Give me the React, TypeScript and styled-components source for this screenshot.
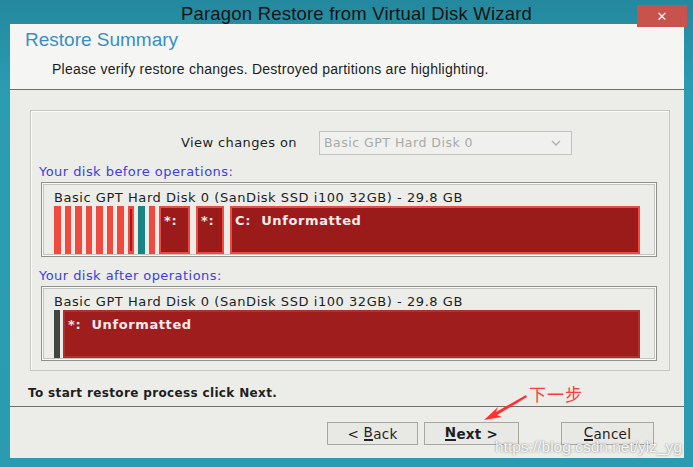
import React from "react";
import styled, { createGlobalStyle } from "styled-components";

const GlobalStyle = createGlobalStyle`
  html, body { margin: 0; padding: 0; }
  body { background: #2a9bb1; font-family: "DejaVu Sans", "Liberation Sans", sans-serif; }
`;

const COLORS = {
  stripe: "#f0493f",
  partition: "#9b1b1b",
  partitionAfter: "#a01d1d",
  system: "#1a8383",
  label: "#3d3de0",
  heading: "#3b8ec4",
};

const Page = styled.div`
  position: relative;
  width: 693px;
  height: 467px;
  overflow: hidden;
  background: linear-gradient(180deg, #24889e 0%, #2b9db3 20%, #2a9bb1 100%);
`;

const TitleBar = styled.div`
  height: 24px;
  display: grid;
  grid-template-columns: 1fr auto 1fr;
  align-items: start;
`;

const Title = styled.div`
  grid-column: 2;
  padding: 3px 0 0 20px;
  font-family: "Liberation Sans", "Open Sans", sans-serif;
  font-size: 18.5px;
  color: #141414;
  letter-spacing: 0.2px;
  white-space: nowrap;
`;

const CloseButton = styled.div`
  grid-column: 3;
  justify-self: end;
  margin: 5px 6px 0 0;
  width: 50px;
  height: 22px;
  background: #c8524c;
  color: #f1f1f1;
  display: flex;
  align-items: center;
  justify-content: center;
  font-family: "DejaVu Sans", sans-serif;
  font-size: 13px;
  font-weight: bold;
  position: relative;
  z-index: 2;
`;

const Window = styled.div`
  margin: 0 9px 0 10px;
  height: 434px;
  display: flex;
  flex-direction: column;
  background: #ecede9;
`;

const Header = styled.div`
  height: 66px;
  background: #f5f6f3;
  border-bottom: 1px solid #6f706d;
  padding: 5px 15px 0;
  box-sizing: border-box;
  flex-shrink: 0;
`;

const Heading = styled.div`
  font-family: "Liberation Sans", "Open Sans", sans-serif;
  font-size: 19px;
  color: ${COLORS.heading};
  line-height: 22px;
`;

const SubHeading = styled.div`
  margin: 10px 0 0 27px;
  font-family: "Liberation Sans", "Open Sans", sans-serif;
  font-size: 14px;
  color: #1c1c1c;
  letter-spacing: 0.25px;
`;

const Body = styled.div`
  flex: 1;
  display: flex;
  flex-direction: column;
  padding: 20px 14px 0 20px;
`;

const Group = styled.div`
  border: 1px solid #c6c7c3;
  box-shadow: inset 1px 1px 0 #fbfbfa;
  padding: 19px 12px 9px 10px;
  display: flex;
  flex-direction: column;
  flex-shrink: 0;
`;

const SelectRow = styled.div`
  display: flex;
  align-items: center;
  height: 25px;
  padding-left: 140px;
  gap: 21px;
`;

const RowLabel = styled.span`
  font-size: 13px;
  color: #1e1e1e;
  letter-spacing: 0.4px;
  width: 117px;
  white-space: nowrap;
`;

const Select = styled.div`
  width: 253px;
  height: 24px;
  box-sizing: border-box;
  border: 1px solid #c2c3bf;
  background: #f0f1ee;
  display: flex;
  align-items: center;
  justify-content: space-between;
  padding: 0 10px 0 4px;
  font-size: 12.5px;
  color: #a9aaa7;
  letter-spacing: 0.5px;
`;

const SectionLabel = styled.div<{ $top: number }>`
  margin: ${(p) => p.$top}px 0 2px -2px;
  font-size: 13px;
  color: ${COLORS.label};
  letter-spacing: 0.45px;
  line-height: 16px;
`;

const DiskBox = styled.div`
  height: 75px;
  box-sizing: border-box;
  border: 1px solid #8f908c;
  box-shadow: inset 0 0 0 1px #fafaf8, inset 0 0 0 2px #c4c5c1;
  padding: 7px 16px 2px 12px;
  display: flex;
  flex-direction: column;
  flex-shrink: 0;
`;

const DiskTitle = styled.div`
  font-size: 13px;
  color: #1e1e1e;
  letter-spacing: 0.55px;
  line-height: 15px;
  white-space: nowrap;
`;

const Bar = styled.div`
  flex: 1;
  display: flex;
  gap: 4px;
  margin-top: 1px;
`;

const Stripe = styled.div<{ $color: string; $core?: boolean }>`
  width: 6.5px;
  background: ${(p) => p.$color};
  position: relative;
  ${(p) =>
    p.$core &&
    `&::after { content: ""; position: absolute; left: 2px; right: 2px; top: 3px; bottom: 3px; background: #9d1b1b; }`}
`;

const Partition = styled.div<{ $width?: number; $bg: string; $border: string; $gap?: number }>`
  ${(p) => (p.$width ? `width: ${p.$width}px;` : "flex: 1;")}
  margin-left: ${(p) => p.$gap ?? 0}px;
  box-sizing: border-box;
  background: ${(p) => p.$bg};
  border: 2px solid ${(p) => p.$border};
  color: #f7eaea;
  font-size: 13px;
  font-weight: bold;
  padding: 5px 3px;
  letter-spacing: 0.6px;
  white-space: nowrap;
`;

const DarkStripe = styled.div`
  width: 6px;
  background: #3e4740;
  margin-right: -1px;
`;

const FooterNote = styled.div`
  margin: 15px 0 0 -2px;
  font-size: 12px;
  font-weight: bold;
  color: #1e1e1e;
  letter-spacing: 0.35px;
  height: 20px;
`;

const Divider = styled.div`
  height: 1px;
  background: #6f706d;
  margin: 0 -14px 0 -20px;
`;

const ButtonRow = styled.div`
  display: flex;
  margin: 15px 16px 0 0;
  padding-left: 297px;
`;

const Button = styled.div<{ $width: number; $gap?: number; $bold?: boolean }>`
  width: ${(p) => p.$width}px;
  height: 23px;
  margin-left: ${(p) => p.$gap ?? 0}px;
  box-sizing: border-box;
  border: 1px solid #a6a7a3;
  background: #e8e9e5;
  display: flex;
  align-items: center;
  justify-content: center;
  font-size: 13.5px;
  font-weight: ${(p) => (p.$bold ? "bold" : "normal")};
  color: #1e1e1e;
  letter-spacing: 0.3px;
  u { text-decoration: none; border-bottom: 2px solid #222; line-height: 13px; }
`;

const Annotation = styled.div`
  position: absolute;
  left: 529px;
  top: 381px;
  font-family: "Noto Sans CJK SC", sans-serif;
  font-size: 17px;
  color: #ff3a3a;
  letter-spacing: 1px;
`;

const Arrow = styled.svg`
  position: absolute;
  left: 480px;
  top: 393px;
`;

const Watermark = styled.div`
  position: absolute;
  left: 495px;
  top: 438px;
  font-family: "Liberation Sans", sans-serif;
  font-size: 15.5px;
  color: rgba(255, 255, 255, 0.92);
  text-shadow: 0 0 2px rgba(60, 60, 60, 0.7);
`;

const beforeStripes = [
  { color: COLORS.stripe },
  { color: COLORS.stripe },
  { color: COLORS.stripe },
  { color: COLORS.stripe },
  { color: COLORS.stripe },
  { color: COLORS.stripe },
  { color: COLORS.stripe },
  { color: COLORS.stripe, core: true },
  { color: COLORS.system },
  { color: COLORS.stripe },
];

const DISK_NAME = "Basic GPT Hard Disk 0 (SanDisk SSD i100 32GB) - 29.8 GB";

export default function App() {
  return (
    <>
      <GlobalStyle />
      <Page>
        <TitleBar>
          <Title>Paragon Restore from Virtual Disk Wizard</Title>
          <CloseButton>✕</CloseButton>
        </TitleBar>
        <Window>
          <Header>
            <Heading>Restore Summary</Heading>
            <SubHeading>Please verify restore changes. Destroyed partitions are highlighting.</SubHeading>
          </Header>
          <Body>
            <Group>
              <SelectRow>
                <RowLabel>View changes on</RowLabel>
                <Select>
                  <span>Basic GPT Hard Disk 0</span>
                  <svg width="10" height="6" viewBox="0 0 10 6">
                    <path d="M1 1 L5 5 L9 1" fill="none" stroke="#b0b1ad" strokeWidth="1.3" />
                  </svg>
                </Select>
              </SelectRow>
              <SectionLabel $top={9}>Your disk before operations:</SectionLabel>
              <DiskBox>
                <DiskTitle>{DISK_NAME}</DiskTitle>
                <Bar>
                  {beforeStripes.map((s, i) => (
                    <Stripe key={i} $color={s.color} $core={s.core} />
                  ))}
                  <Partition $width={31} $bg={COLORS.partition} $border={COLORS.stripe}>*:</Partition>
                  <Partition $width={28} $gap={2} $bg={COLORS.partition} $border={COLORS.stripe}>*:</Partition>
                  <Partition $gap={2} $bg={COLORS.partition} $border={COLORS.stripe}>C:&nbsp; Unformatted</Partition>
                </Bar>
              </DiskBox>
              <SectionLabel $top={11}>Your disk after operations:</SectionLabel>
              <DiskBox>
                <DiskTitle>{DISK_NAME}</DiskTitle>
                <Bar>
                  <DarkStripe />
                  <Partition $bg={COLORS.partitionAfter} $border="#b0302c">*:&nbsp; Unformatted</Partition>
                </Bar>
              </DiskBox>
            </Group>
            <FooterNote>To start restore process click Next.</FooterNote>
            <Divider />
            <ButtonRow>
              <Button $width={91}>&lt;&nbsp;<u>B</u>ack</Button>
              <Button $width={95} $gap={6} $bold>
                <u>N</u>ext &gt;
              </Button>
              <Button $width={93} $gap={42}>
                <u>C</u>ancel
              </Button>
            </ButtonRow>
          </Body>
        </Window>
        <Annotation>下一步</Annotation>
        <Arrow width="50" height="30" viewBox="0 0 50 30">
          <path d="M46 2 L16 19 L18 14 L4 27 L22 24 L17 22 L47 4 Z" fill="#ff3030" />
        </Arrow>
        <Watermark>https://blog.csdn.net/ylz_yg</Watermark>
      </Page>
    </>
  );
}
